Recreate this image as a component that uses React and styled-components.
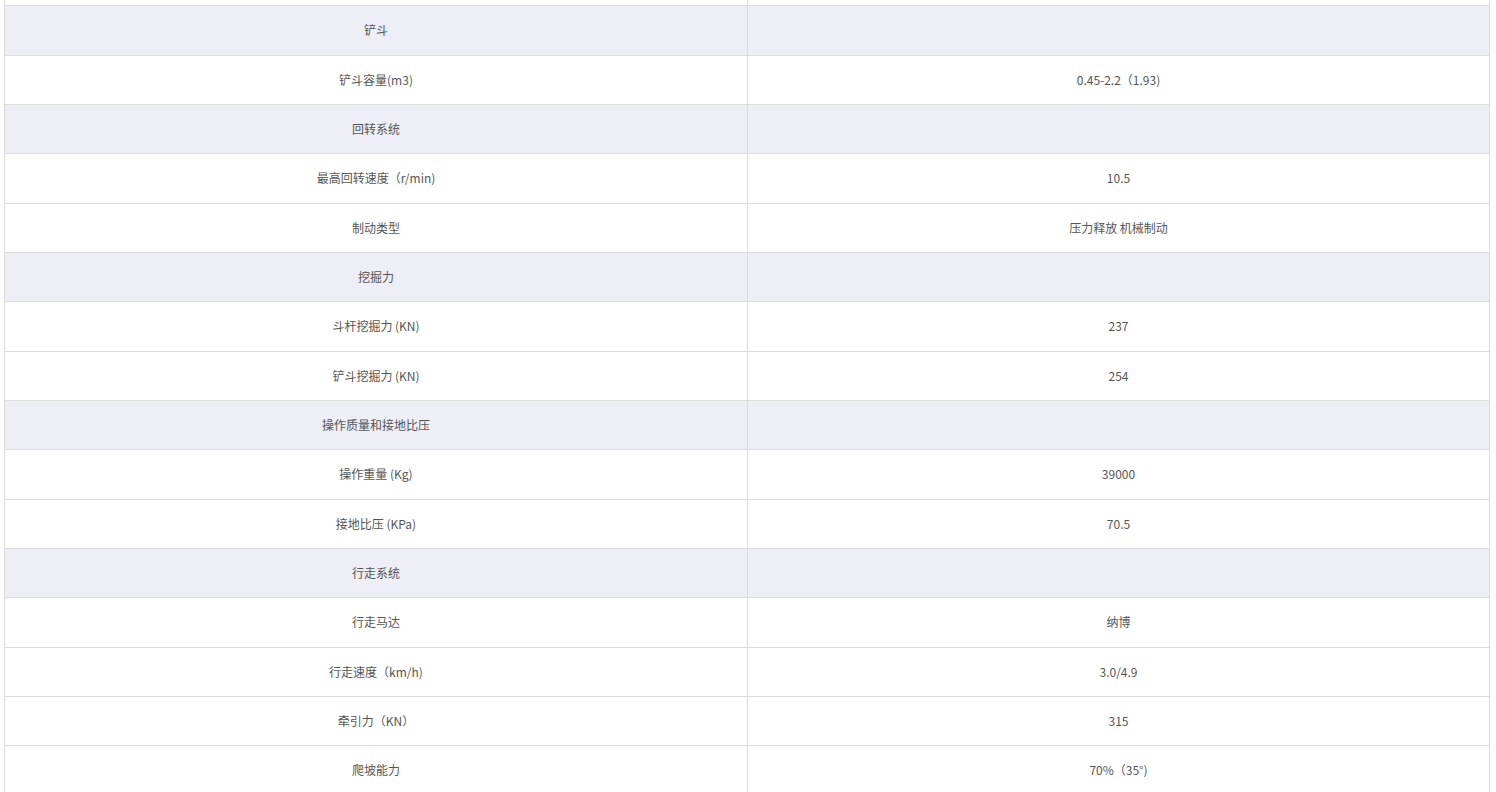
import React from "react";
import styled, { createGlobalStyle } from "styled-components";

const rows = [
  { label: "铲斗", group: true },
  { label: "铲斗容量(m3)", value: "0.45-2.2（1.93)" },
  { label: "回转系统", group: true },
  { label: "最高回转速度（r/min)", value: "10.5" },
  { label: "制动类型", value: "压力释放 机械制动" },
  { label: "挖掘力", group: true },
  { label: "斗杆挖掘力 (KN)", value: "237" },
  { label: "铲斗挖掘力 (KN)", value: "254" },
  { label: "操作质量和接地比压", group: true },
  { label: "操作重量 (Kg)", value: "39000" },
  { label: "接地比压 (KPa)", value: "70.5" },
  { label: "行走系统", group: true },
  { label: "行走马达", value: "纳博" },
  { label: "行走速度（km/h)", value: "3.0/4.9" },
  { label: "牵引力（KN）", value: "315" },
  { label: "爬坡能力", value: "70%（35°)" },
];

const App = () => {
  return (
    <>
      <Global />
      <Page>
        <Table>
          <Stub>
            <Cell />
            <Cell last />
          </Stub>
          {rows.map((r, i) => (
            <Row key={i} group={r.group}>
              <Cell>{r.label}</Cell>
              <Cell last>{r.value || ""}</Cell>
            </Row>
          ))}
        </Table>
      </Page>
    </>
  );
};

export default App;

const Global = createGlobalStyle`
  html, body {
    margin: 0;
    padding: 0;
    background: #fff;
    overflow: hidden;
  }
`;

const Page = styled.div`
  padding-left: 4px;
  width: 1486px;
  height: 792px;
  overflow: hidden;
  font-family: "Noto Sans CJK SC", "Microsoft YaHei", sans-serif;
  font-size: 12px;
  color: #555;
`;

const Table = styled.div`
  border-left: 1px solid #dcdcdc;
  border-right: 1px solid #dcdcdc;
  width: 1484px;
`;

const Stub = styled.div`
  display: grid;
  grid-template-columns: 743px 741px;
  height: 5.333px;
  border-bottom: 1px solid #dcdcdc;
`;

const Row = styled.div`
  display: grid;
  grid-template-columns: 743px 741px;
  height: 48.333px;
  border-bottom: 1px solid #dcdcdc;
  background: ${(p) => (p.group ? "#eeeef6" : "#fff")};
`;

const Cell = styled.div`
  display: flex;
  align-items: center;
  justify-content: center;
  padding-bottom: 1px;
  border-right: ${(p) => (p.last ? "none" : "1px solid #dcdcdc")};
  white-space: nowrap;
`;
